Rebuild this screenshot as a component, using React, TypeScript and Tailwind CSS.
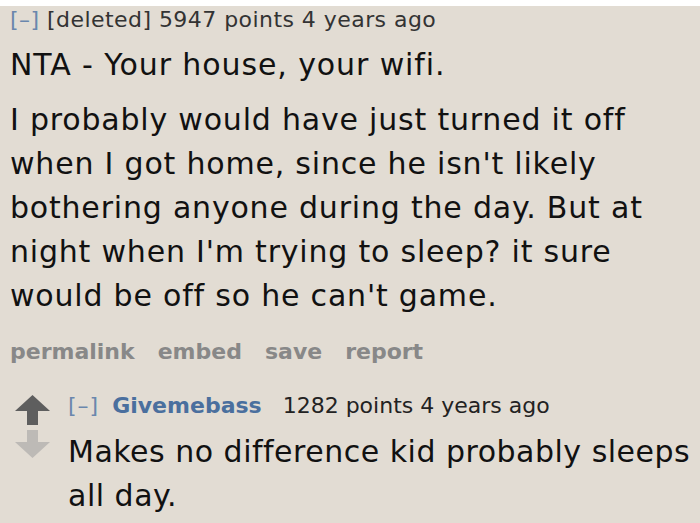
export default function App() {
  return (
    <div className="w-[700px] h-[523px] bg-white pt-[6px] overflow-hidden" style={{ fontFamily: '"DejaVu Sans", Verdana, sans-serif' }}>
      <div className="h-full bg-[#e2dcd3] pl-[10px] text-[#222]">
        {/* parent comment */}
        <div className="text-[22px] leading-[28px] tracking-[0.45px] text-[#333]">
          <span className="text-[#6a87ad]">[–]</span> [deleted] 5947 points 4 years ago
        </div>
        <div className="text-[30px] leading-[40px] tracking-[0.9px] mt-[11px] text-[#111]">NTA - Your house, your wifi.</div>
        <p className="text-[30px] leading-[44px] tracking-[0.8px] mt-[13px] text-[#111] w-[685px]">
          I probably would have just turned it off when I got home, since he isn't likely bothering anyone during the day. But at night when I'm trying to sleep? it sure would be off so he can't game.
        </p>
        <div className="flex gap-[23px] text-[22px] font-bold text-[#888] mt-[20px] leading-[28px]">
          <span>permalink</span>
          <span>embed</span>
          <span>save</span>
          <span>report</span>
        </div>

        {/* child comment */}
        <div className="flex mt-[26px]">
          <div className="flex flex-col w-[35px] ml-[5px] pt-[3px] gap-[5px] shrink-0">
            <svg width="35" height="30" viewBox="0 0 35 30">
              <path d="M17.5 0 L35 16 L23 16 L23 30 L12 30 L12 16 L0 16 Z" fill="#5e5e5e" />
            </svg>
            <svg width="35" height="28" viewBox="0 0 35 28">
              <path d="M17.5 28 L35 12 L23 12 L23 0 L12 0 L12 12 L0 12 Z" fill="#bdbab6" />
            </svg>
          </div>
          <div className="ml-[18px]">
            <div className="text-[22px] leading-[28px] text-[#222] whitespace-nowrap">
              <span className="text-[#6a87ad] mr-[13px] tracking-[1px]">[–]</span>
              <span className="font-bold text-[#4a6f9e]">Givemebass</span>
              <span className="ml-[21px]">1282 points 4 years ago</span>
            </div>
            <p className="text-[30px] leading-[44px] tracking-[0.5px] mt-[10px] text-[#111] w-[630px]">
              Makes no difference kid probably sleeps all day.
            </p>
          </div>
        </div>
      </div>
    </div>
  );
}
